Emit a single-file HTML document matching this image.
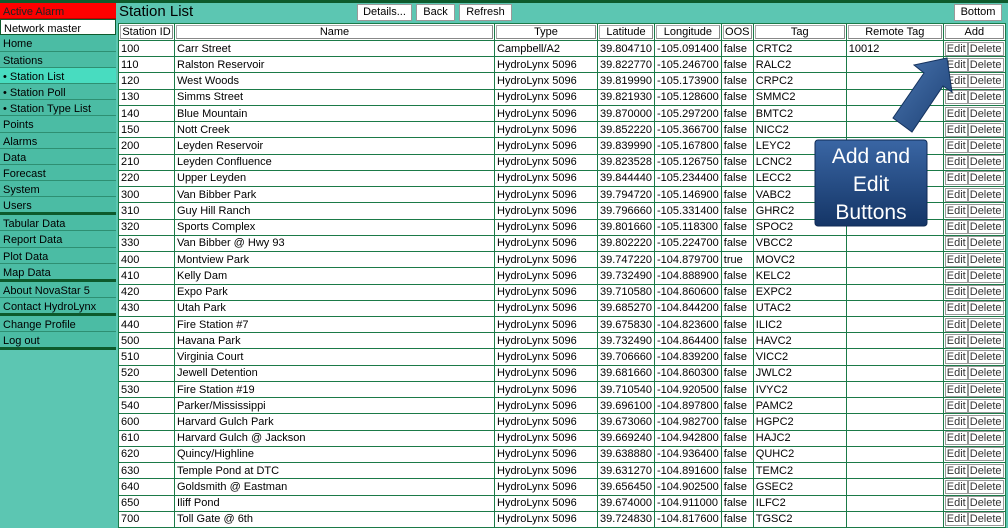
<!DOCTYPE html>
<html><head><meta charset="utf-8"><style>
*{margin:0;padding:0;box-sizing:border-box}
body{width:1008px;height:521px;overflow:hidden;background:#5cc6b2;font-family:"Liberation Sans",Arial,sans-serif;font-size:11px;color:#000;position:relative}
.topbar{position:absolute;left:0;top:0;width:1008px;height:3px;background:#0d5a2c}
.side{position:absolute;left:0;top:3px;width:116px}
.si{height:16.2px;line-height:14px;padding-top:2px;padding-left:3px;background:#4bbca4;border-bottom:1px solid #2e8f72;font-size:11px;color:#000;white-space:nowrap}
.si.sel{background:#48dcc0}
.si.thick{border-bottom:3px solid #0d5a2c;height:18px}
.alarm{background:#f00;color:#222;border-bottom:1px solid #b00}
.net{background:#fff;border:1px solid #0d5a2c}
h1{position:absolute;left:119px;top:3px;font-size:15px;font-weight:normal;color:#000}
.btn{position:absolute;top:4px;height:17px;background:#fff;border:1px solid #999;font-size:11px;line-height:15px;text-align:center}
table{position:absolute;left:118px;top:23px;border-collapse:collapse;table-layout:fixed;background:#fff}
td,th{border:1px solid #1b7a48;height:16.24px;padding:0 2px;font-size:11px;white-space:nowrap;overflow:hidden;font-weight:normal;line-height:14px}
th{background:#fff;border:1px solid #1b7a48;padding:1px}
th span{display:block;border:1px solid #aaa;border-right-color:#888;border-bottom-color:#888;height:14px;line-height:12px;text-align:center}
td.b{padding:0 0 0 1px}
.e{display:inline-block;border:1px solid #999;background:#fff;height:14px;line-height:12px;padding:0 1px;color:#333}
</style></head><body>
<div class="topbar"></div>
<div class="side">
<div class="si alarm">Active Alarm</div>
<div class="si net">Network master</div>
<div class="si">Home</div>
<div class="si">Stations</div>
<div class="si sel">• Station List</div>
<div class="si">• Station Poll</div>
<div class="si">• Station Type List</div>
<div class="si">Points</div>
<div class="si">Alarms</div>
<div class="si">Data</div>
<div class="si">Forecast</div>
<div class="si">System</div>
<div class="si thick">Users</div>
<div class="si">Tabular Data</div>
<div class="si">Report Data</div>
<div class="si">Plot Data</div>
<div class="si thick">Map Data</div>
<div class="si">About NovaStar 5</div>
<div class="si thick">Contact HydroLynx</div>
<div class="si">Change Profile</div>
<div class="si thick">Log out</div>
</div>
<h1>Station List</h1>
<div class="btn" style="left:357px;width:55px">Details...</div>
<div class="btn" style="left:416px;width:39px">Back</div>
<div class="btn" style="left:459px;width:53px">Refresh</div>
<div class="btn" style="left:954px;width:48px">Bottom</div>
<table>
<colgroup><col style="width:56px"><col style="width:320px"><col style="width:103px"><col style="width:56px"><col style="width:65px"><col style="width:32px"><col style="width:93px"><col style="width:97px"><col style="width:62px"></colgroup>
<tr><th><span>Station ID</span></th><th><span>Name</span></th><th><span>Type</span></th><th><span>Latitude</span></th><th><span>Longitude</span></th><th><span>OOS</span></th><th><span>Tag</span></th><th><span>Remote Tag</span></th><th><span>Add</span></th></tr>
<tbody>
<tr><td>100</td><td>Carr Street</td><td>Campbell/A2</td><td>39.804710</td><td>-105.091400</td><td>false</td><td>CRTC2</td><td>10012</td><td class="b"><span class="e">Edit</span><span class="e">Delete</span></td></tr>
<tr><td>110</td><td>Ralston Reservoir</td><td>HydroLynx 5096</td><td>39.822770</td><td>-105.246700</td><td>false</td><td>RALC2</td><td></td><td class="b"><span class="e">Edit</span><span class="e">Delete</span></td></tr>
<tr><td>120</td><td>West Woods</td><td>HydroLynx 5096</td><td>39.819990</td><td>-105.173900</td><td>false</td><td>CRPC2</td><td></td><td class="b"><span class="e">Edit</span><span class="e">Delete</span></td></tr>
<tr><td>130</td><td>Simms Street</td><td>HydroLynx 5096</td><td>39.821930</td><td>-105.128600</td><td>false</td><td>SMMC2</td><td></td><td class="b"><span class="e">Edit</span><span class="e">Delete</span></td></tr>
<tr><td>140</td><td>Blue Mountain</td><td>HydroLynx 5096</td><td>39.870000</td><td>-105.297200</td><td>false</td><td>BMTC2</td><td></td><td class="b"><span class="e">Edit</span><span class="e">Delete</span></td></tr>
<tr><td>150</td><td>Nott Creek</td><td>HydroLynx 5096</td><td>39.852220</td><td>-105.366700</td><td>false</td><td>NICC2</td><td></td><td class="b"><span class="e">Edit</span><span class="e">Delete</span></td></tr>
<tr><td>200</td><td>Leyden Reservoir</td><td>HydroLynx 5096</td><td>39.839990</td><td>-105.167800</td><td>false</td><td>LEYC2</td><td></td><td class="b"><span class="e">Edit</span><span class="e">Delete</span></td></tr>
<tr><td>210</td><td>Leyden Confluence</td><td>HydroLynx 5096</td><td>39.823528</td><td>-105.126750</td><td>false</td><td>LCNC2</td><td></td><td class="b"><span class="e">Edit</span><span class="e">Delete</span></td></tr>
<tr><td>220</td><td>Upper Leyden</td><td>HydroLynx 5096</td><td>39.844440</td><td>-105.234400</td><td>false</td><td>LECC2</td><td></td><td class="b"><span class="e">Edit</span><span class="e">Delete</span></td></tr>
<tr><td>300</td><td>Van Bibber Park</td><td>HydroLynx 5096</td><td>39.794720</td><td>-105.146900</td><td>false</td><td>VABC2</td><td></td><td class="b"><span class="e">Edit</span><span class="e">Delete</span></td></tr>
<tr><td>310</td><td>Guy Hill Ranch</td><td>HydroLynx 5096</td><td>39.796660</td><td>-105.331400</td><td>false</td><td>GHRC2</td><td></td><td class="b"><span class="e">Edit</span><span class="e">Delete</span></td></tr>
<tr><td>320</td><td>Sports Complex</td><td>HydroLynx 5096</td><td>39.801660</td><td>-105.118300</td><td>false</td><td>SPOC2</td><td></td><td class="b"><span class="e">Edit</span><span class="e">Delete</span></td></tr>
<tr><td>330</td><td>Van Bibber @ Hwy 93</td><td>HydroLynx 5096</td><td>39.802220</td><td>-105.224700</td><td>false</td><td>VBCC2</td><td></td><td class="b"><span class="e">Edit</span><span class="e">Delete</span></td></tr>
<tr><td>400</td><td>Montview Park</td><td>HydroLynx 5096</td><td>39.747220</td><td>-104.879700</td><td>true</td><td>MOVC2</td><td></td><td class="b"><span class="e">Edit</span><span class="e">Delete</span></td></tr>
<tr><td>410</td><td>Kelly Dam</td><td>HydroLynx 5096</td><td>39.732490</td><td>-104.888900</td><td>false</td><td>KELC2</td><td></td><td class="b"><span class="e">Edit</span><span class="e">Delete</span></td></tr>
<tr><td>420</td><td>Expo Park</td><td>HydroLynx 5096</td><td>39.710580</td><td>-104.860600</td><td>false</td><td>EXPC2</td><td></td><td class="b"><span class="e">Edit</span><span class="e">Delete</span></td></tr>
<tr><td>430</td><td>Utah Park</td><td>HydroLynx 5096</td><td>39.685270</td><td>-104.844200</td><td>false</td><td>UTAC2</td><td></td><td class="b"><span class="e">Edit</span><span class="e">Delete</span></td></tr>
<tr><td>440</td><td>Fire Station #7</td><td>HydroLynx 5096</td><td>39.675830</td><td>-104.823600</td><td>false</td><td>ILIC2</td><td></td><td class="b"><span class="e">Edit</span><span class="e">Delete</span></td></tr>
<tr><td>500</td><td>Havana Park</td><td>HydroLynx 5096</td><td>39.732490</td><td>-104.864400</td><td>false</td><td>HAVC2</td><td></td><td class="b"><span class="e">Edit</span><span class="e">Delete</span></td></tr>
<tr><td>510</td><td>Virginia Court</td><td>HydroLynx 5096</td><td>39.706660</td><td>-104.839200</td><td>false</td><td>VICC2</td><td></td><td class="b"><span class="e">Edit</span><span class="e">Delete</span></td></tr>
<tr><td>520</td><td>Jewell Detention</td><td>HydroLynx 5096</td><td>39.681660</td><td>-104.860300</td><td>false</td><td>JWLC2</td><td></td><td class="b"><span class="e">Edit</span><span class="e">Delete</span></td></tr>
<tr><td>530</td><td>Fire Station #19</td><td>HydroLynx 5096</td><td>39.710540</td><td>-104.920500</td><td>false</td><td>IVYC2</td><td></td><td class="b"><span class="e">Edit</span><span class="e">Delete</span></td></tr>
<tr><td>540</td><td>Parker/Mississippi</td><td>HydroLynx 5096</td><td>39.696100</td><td>-104.897800</td><td>false</td><td>PAMC2</td><td></td><td class="b"><span class="e">Edit</span><span class="e">Delete</span></td></tr>
<tr><td>600</td><td>Harvard Gulch Park</td><td>HydroLynx 5096</td><td>39.673060</td><td>-104.982700</td><td>false</td><td>HGPC2</td><td></td><td class="b"><span class="e">Edit</span><span class="e">Delete</span></td></tr>
<tr><td>610</td><td>Harvard Gulch @ Jackson</td><td>HydroLynx 5096</td><td>39.669240</td><td>-104.942800</td><td>false</td><td>HAJC2</td><td></td><td class="b"><span class="e">Edit</span><span class="e">Delete</span></td></tr>
<tr><td>620</td><td>Quincy/Highline</td><td>HydroLynx 5096</td><td>39.638880</td><td>-104.936400</td><td>false</td><td>QUHC2</td><td></td><td class="b"><span class="e">Edit</span><span class="e">Delete</span></td></tr>
<tr><td>630</td><td>Temple Pond at DTC</td><td>HydroLynx 5096</td><td>39.631270</td><td>-104.891600</td><td>false</td><td>TEMC2</td><td></td><td class="b"><span class="e">Edit</span><span class="e">Delete</span></td></tr>
<tr><td>640</td><td>Goldsmith @ Eastman</td><td>HydroLynx 5096</td><td>39.656450</td><td>-104.902500</td><td>false</td><td>GSEC2</td><td></td><td class="b"><span class="e">Edit</span><span class="e">Delete</span></td></tr>
<tr><td>650</td><td>Iliff Pond</td><td>HydroLynx 5096</td><td>39.674000</td><td>-104.911000</td><td>false</td><td>ILFC2</td><td></td><td class="b"><span class="e">Edit</span><span class="e">Delete</span></td></tr>
<tr><td>700</td><td>Toll Gate @ 6th</td><td>HydroLynx 5096</td><td>39.724830</td><td>-104.817600</td><td>false</td><td>TGSC2</td><td></td><td class="b"><span class="e">Edit</span><span class="e">Delete</span></td></tr>
</tbody></table>
<svg style="position:absolute;left:0;top:0" width="1008" height="521">
<defs><linearGradient id="g" x1="0" y1="0" x2="1" y2="1"><stop offset="0" stop-color="#4a76b0"/><stop offset="1" stop-color="#1c3f73"/></linearGradient>
<linearGradient id="g2" x1="0" y1="0" x2="0" y2="1"><stop offset="0" stop-color="#3a66a4"/><stop offset="1" stop-color="#143566"/></linearGradient></defs>
<polygon points="947,58 914,65 924,73 893,118 912,132 943,86 952,92" fill="url(#g)" stroke="#15335f" stroke-width="1"/>
<rect x="815" y="140" width="112" height="86" rx="3" fill="url(#g2)" stroke="#0f2a55"/>
<text x="871" y="163" fill="#fff" font-size="21" text-anchor="middle" font-family="Liberation Sans, sans-serif">Add and</text>
<text x="871" y="191" fill="#fff" font-size="21" text-anchor="middle" font-family="Liberation Sans, sans-serif">Edit</text>
<text x="871" y="219" fill="#fff" font-size="21" text-anchor="middle" font-family="Liberation Sans, sans-serif">Buttons</text>
</svg>
</body></html>
